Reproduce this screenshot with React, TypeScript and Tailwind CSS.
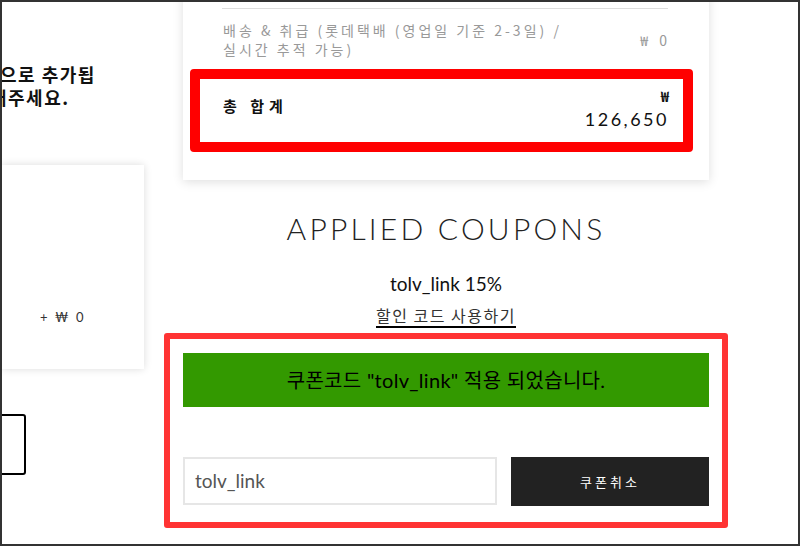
export default function App() {
  return (
    <div className="w-[800px] h-[546px] border-2 border-[#333] bg-white overflow-hidden flex font-['Noto_Sans_CJK_KR',sans-serif] text-[#222]">
      {/* left column, cut off by the frame */}
      <div className="w-[142px] shrink-0 flex flex-col">
        <div className="mt-[61px] overflow-hidden whitespace-nowrap text-[18px] font-bold leading-[23px] tracking-[1.5px] text-[#111]">
          <p className="-ml-[2px]">으로 추가됩</p>
          <p className="-ml-[12px]">해주세요.</p>
        </div>
        <div className="mt-[56px] h-[204px] bg-white shadow-[0_0_8px_rgba(0,0,0,0.14)]">
          <p className="pt-[143px] pl-[38px] text-[13px] leading-[18px] tracking-[2px] text-[#333] font-['Lato','Noto_Sans_CJK_KR',sans-serif]">
            + ₩ 0
          </p>
        </div>
        <div className="mt-[45px] -ml-[10px] w-[34px] h-[61px] border-2 border-black rounded-[3px]" />
      </div>

      {/* right column */}
      <div className="ml-[39px] w-[526px] shrink-0 flex flex-col">
        {/* order summary */}
        <div className="-mt-[10px] pt-[16px] pb-[28px] bg-white shadow-[0_2px_10px_rgba(0,0,0,0.13)]">
          <div className="ml-[39px] mr-[41px] border-t border-[#ddd]" />
          <div className="mt-[12px] ml-[40px] mr-[41px] flex items-center justify-between text-[14px] leading-[19px] tracking-[3px] text-[#999]">
            <p>
              배송 &amp; 취급 (롯데택배 (영업일 기준 2-3일) /
              <br />
              실시간 추적 가능)
            </p>
            <span className="-mr-[3px] tracking-[4px]">₩ 0</span>
          </div>
          <div className="mt-[10px] ml-[7px] mr-[16px] h-[83px] border-[10px] border-[#ff0000] rounded-[4px] flex justify-between pl-[23px] pr-[14px]">
            <p className="pt-[17px] text-[15px] leading-[20px] font-bold tracking-[5px] text-[#111]">총 합계</p>
            <div className="flex flex-col items-end pt-[7px]">
              <span className="text-[14px] leading-[20px] font-bold text-[#111]">₩</span>
              <span className="mt-[1px] text-[18px] leading-[24px] tracking-[2.5px] text-[#111] font-['Lato',sans-serif]">126,650</span>
            </div>
          </div>
        </div>

        {/* applied coupons */}
        <h2 className="mt-[30px] text-center text-[30px] leading-[36px] font-light tracking-[3.2px] text-[#222] font-['Lato',sans-serif]">
          APPLIED COUPONS
        </h2>
        <p className="mt-[26px] text-center text-[19px] leading-[24px] text-[#111] font-['Lato',sans-serif]">tolv_link 15%</p>
        <div className="mt-[8px] flex justify-center">
          <span className="border-b-2 border-black text-[16px] leading-[22px] tracking-[1.5px] text-[#333]">할인 코드 사용하기</span>
        </div>

        <div className="mt-[5px] -mx-[19px] border-[6px] border-[#ff3333] rounded-[3px] px-[13px] pt-[14px] pb-[16px]">
          <div className="h-[54px] bg-[#339900] flex items-center justify-center text-[20px] tracking-[0.3px] text-black font-['Lato','Noto_Sans_CJK_KR',sans-serif]">
            쿠폰코드 "tolv_link" 적용 되었습니다.
          </div>
          <div className="mt-[50px] flex gap-[14px] items-start">
            <div className="w-[314px] h-[48px] border-2 border-[#e6e6e6] flex items-center pl-[10px] text-[19px] text-[#555] font-['Lato',sans-serif]">
              tolv_link
            </div>
            <button className="flex-1 h-[49px] bg-[#222] text-white text-[13px] tracking-[3px] flex items-center justify-center">
              쿠폰취소
            </button>
          </div>
        </div>
      </div>
    </div>
  );
}
